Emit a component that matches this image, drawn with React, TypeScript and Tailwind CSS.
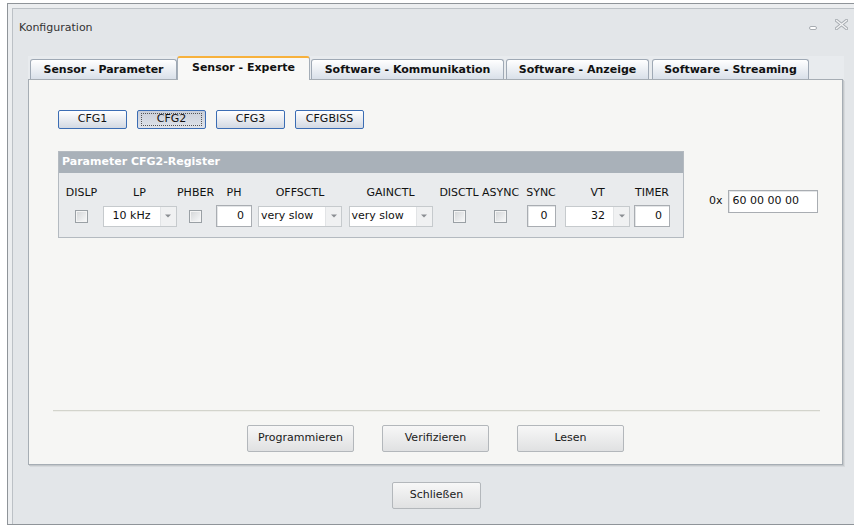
import React from "react";

const font = "font-['DejaVu_Sans',sans-serif]";

function Checkbox() {
  return (
    <div className="flex h-[13px] w-[13px] items-center justify-center border border-[#9aa0a5] bg-[#f4f4f4]">
      <div className="h-[9px] w-[9px] bg-gradient-to-br from-[#d6d8da] to-[#f6f7f8]" />
    </div>
  );
}

function Arrow() {
  return (
    <div className="flex w-[16px] items-center justify-center border-l border-[#e2e4e6] bg-[#f0f1f2]">
      <svg width="6" height="4" viewBox="0 0 6 4">
        <path d="M0 0.5 L6 0.5 L3 3.5 Z" fill="#8a8e92" />
      </svg>
    </div>
  );
}

function Field({ className, value }: { className: string; value: string }) {
  return (
    <div
      className={`flex h-[22px] items-center justify-end border border-[#a9adb2] bg-white pr-[7px] text-[11px] text-[#111] shadow-[inset_1px_1px_0_#e4e6e8] ${className}`}
    >
      {value}
    </div>
  );
}

function CfgButton({ label, pressed }: { label: string; pressed?: boolean }) {
  return (
    <div
      className={`flex h-[19px] w-[69px] items-center justify-center rounded-[2px] border border-[#3b6db4] text-[11px] text-[#111] ${
        pressed
          ? "bg-gradient-to-b from-[#c9ced8] to-[#dfe3ea]"
          : "bg-gradient-to-b from-[#ffffff] to-[#d3d9e3]"
      }`}
    >
      {pressed ? (
        <div className="flex h-[13px] w-[61px] items-center justify-center border border-dotted border-[#555]">
          {label}
        </div>
      ) : (
        label
      )}
    </div>
  );
}

function PushButton({ label }: { label: string }) {
  return (
    <div className="flex h-[27px] w-[107px] items-center justify-center rounded-[2px] border border-[#b3b7bb] bg-gradient-to-b from-[#f7f7f7] to-[#e0e1e2] text-[11px] text-[#1a1a1a]">
      {label}
    </div>
  );
}

function Tab({
  label,
  className,
  active,
}: {
  label: string;
  className: string;
  active?: boolean;
}) {
  if (active) {
    return (
      <div
        className={`relative z-10 -mb-[1px] flex h-[24px] items-center justify-center rounded-t-[3px] border-x border-[#a5aeb8] border-t-2 border-t-[#f7b13c] bg-[#f8f8f7] pb-[1px] text-[11px] font-bold text-[#111] ${className}`}
      >
        {label}
      </div>
    );
  }
  return (
    <div
      className={`flex h-[20px] items-center justify-center rounded-t-[3px] border-x border-t border-[#9fa9b5] bg-gradient-to-b from-[#ffffff] to-[#d9e0e9] pt-[1px] text-[11px] font-bold text-[#111] ${className}`}
    >
      {label}
    </div>
  );
}

function Col({
  label,
  className,
  children,
}: {
  label: string;
  className: string;
  children: React.ReactNode;
}) {
  return (
    <div className={`flex flex-col items-center ${className}`}>
      <div className="h-[13px] whitespace-nowrap text-[11px] leading-[13px] text-[#111]">
        {label}
      </div>
      <div className="mt-[6px] flex h-[22px] items-center">{children}</div>
    </div>
  );
}

export default function App() {
  return (
    <div className={`h-[526px] w-[854px] overflow-hidden bg-white ${font}`}>
      {/* window frame */}
      <div className="ml-[7px] mt-[3px] h-[522px] border-b border-l border-t border-[#8f9499] bg-[#eceef0] pl-[4px] pt-[4px]">
        <div className="flex h-full flex-col border-l border-t border-[#bcc1c6] bg-[#e3e6e9]">
          {/* title bar */}
          <div className="flex h-[47px] items-start justify-between pt-[12px]">
            <div className="pl-[6px] text-[11px] leading-[13px] text-[#333]">Konfiguration</div>
            <div className="mr-[6px] flex items-center gap-[18px] pt-[4px]">
              <svg width="8" height="4" viewBox="0 0 8 4">
                <rect x="0.5" y="0.5" width="7" height="3" rx="1.5" fill="#fff" stroke="#a7acb1" />
              </svg>
              <svg width="13" height="11" viewBox="0 0 13 11" className="-mt-[6px]">
                <path d="M1.5 1.5 L11.5 9.5 M11.5 1.5 L1.5 9.5" stroke="#a9aeb3" strokeWidth="3.4" strokeLinecap="round" />
                <path d="M1.5 1.5 L11.5 9.5 M11.5 1.5 L1.5 9.5" stroke="#f2f3f4" strokeWidth="1.4" strokeLinecap="round" />
              </svg>
            </div>
          </div>

          {/* tabbed pane */}
          <div className="ml-[15px] w-[816px]">
            <div className="flex h-[23px] items-end bg-[#e8ebee] pl-[2px]">
              <Tab label="Sensor - Parameter" className="w-[147px]" />
              <Tab label="Sensor - Experte" className="w-[133px]" active />
              <Tab label="Software - Kommunikation" className="ml-[1px] w-[193px]" />
              <Tab label="Software - Anzeige" className="ml-[2px] w-[143px]" />
              <Tab label="Software - Streaming" className="ml-[3px] w-[157px]" />
              <div className="flex-1" />
            </div>

            <div className="flex h-[386px] w-[815px] flex-col border border-[#a6adb4] bg-[#f6f6f4] shadow-[1px_1px_0_#c4c8cb,2px_2px_0_#d6d9dc]">
              {/* register set buttons */}
              <div className="ml-[29px] mt-[30px] flex gap-[10px]">
                <CfgButton label="CFG1" />
                <CfgButton label="CFG2" pressed />
                <CfgButton label="CFG3" />
                <CfgButton label="CFGBISS" />
              </div>

              <div className="ml-[29px] mt-[22px] flex items-start">
                {/* register group */}
                <div className="w-[626px] border border-[#b4bac0] bg-[#e9ebed]">
                  <div className="flex h-[21px] items-center bg-[#a9b1b9] pl-[3px] text-[11px] font-bold text-white">
                    Parameter CFG2-Register
                  </div>
                  <div className="flex pb-[10px] pl-[3px] pt-[13px]">
                    <Col label="DISLP" className="w-[39px]">
                      <Checkbox />
                    </Col>
                    <Col label="LP" className="w-[77px]">
                      <div className="flex h-[21px] w-[74px] border border-[#c6cacd] bg-white">
                        <div className="flex flex-1 items-center justify-center text-[11px] text-[#111]">10 kHz</div>
                        <Arrow />
                      </div>
                    </Col>
                    <Col label="PHBER" className="w-[35px]">
                      <Checkbox />
                    </Col>
                    <Col label="PH" className="w-[42px]">
                      <Field className="w-[36px]" value="0" />
                    </Col>
                    <Col label="OFFSCTL" className="w-[90px]">
                      <div className="flex h-[21px] w-[84px] border border-[#c6cacd] bg-white">
                        <div className="flex flex-1 items-center pl-[2px] text-[11px] text-[#111]">very slow</div>
                        <Arrow />
                      </div>
                    </Col>
                    <Col label="GAINCTL" className="w-[91px]">
                      <div className="flex h-[21px] w-[84px] border border-[#c6cacd] bg-white">
                        <div className="flex flex-1 items-center pl-[2px] text-[11px] text-[#111]">very slow</div>
                        <Arrow />
                      </div>
                    </Col>
                    <Col label="DISCTL" className="w-[46px]">
                      <Checkbox />
                    </Col>
                    <Col label="ASYNC" className="w-[37px]">
                      <Checkbox />
                    </Col>
                    <Col label="SYNC" className="w-[44px]">
                      <Field className="w-[29px]" value="0" />
                    </Col>
                    <Col label="VT" className="w-[69px]">
                      <div className="flex h-[21px] w-[65px] border border-[#c6cacd] bg-white">
                        <div className="flex flex-1 items-center justify-end pr-[8px] text-[11px] text-[#111]">32</div>
                        <Arrow />
                      </div>
                    </Col>
                    <Col label="TIMER" className="w-[40px]">
                      <Field className="w-[36px]" value="0" />
                    </Col>
                  </div>
                </div>

                {/* raw register value */}
                <div className="ml-[25px] mt-[39px] flex items-center">
                  <span className="text-[11px] text-[#111]">0x</span>
                  <div className="ml-[5px] flex h-[23px] w-[90px] items-center border border-[#a9adb2] bg-white pl-[4px] text-[11px] text-[#111] shadow-[inset_1px_1px_0_#e4e6e8]">
                    60 00 00 00
                  </div>
                </div>
              </div>

              {/* actions */}
              <div className="mt-auto">
                <div className="ml-[24px] mr-[22px] h-[2px] border-t border-[#d3d4cc] bg-[#eeeeea]" />
                <div className="mb-[12px] mt-[13px] flex justify-center gap-[28px]">
                  <PushButton label="Programmieren" />
                  <PushButton label="Verifizieren" />
                  <PushButton label="Lesen" />
                </div>
              </div>
            </div>
          </div>

          <div className="mt-[17px] flex justify-center pl-[6px]">
            <div className="flex h-[27px] w-[89px] items-center justify-center rounded-[2px] border border-[#b3b7bb] bg-gradient-to-b from-[#f7f7f7] to-[#e0e1e2] text-[11px] text-[#1a1a1a]">
              Schließen
            </div>
          </div>
        </div>
      </div>
    </div>
  );
}
